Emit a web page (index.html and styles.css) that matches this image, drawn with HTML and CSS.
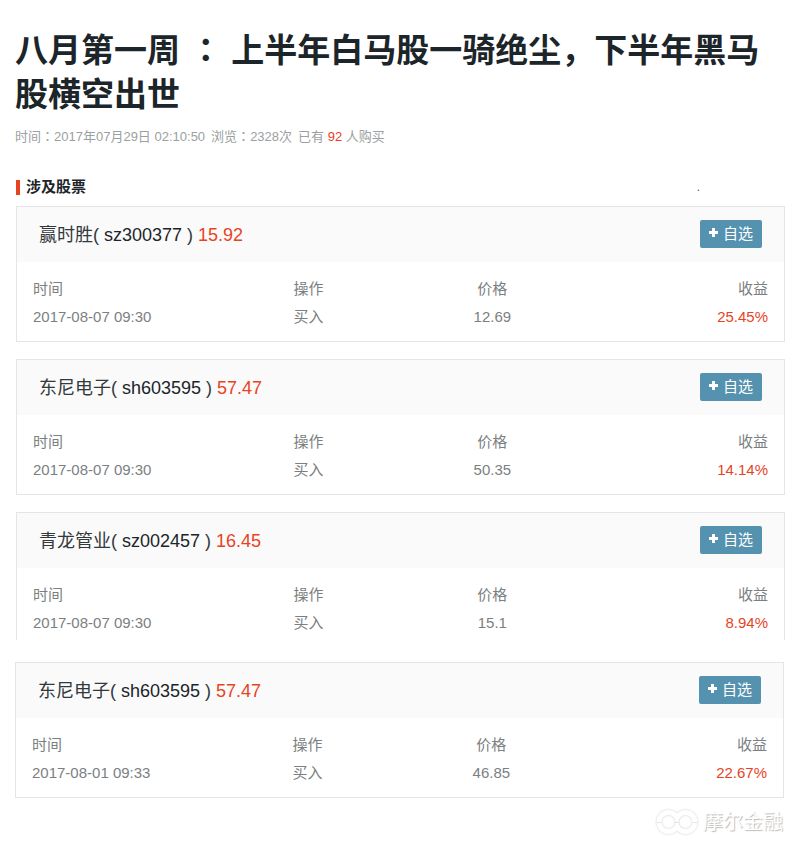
FILE: index.html
```html
<!DOCTYPE html>
<html lang="zh-CN">
<head>
    <meta charset="UTF-8">
    <meta name="viewport" content="width=device-width, initial-scale=1.0">
    <title>八月第一周</title>
    <link rel="stylesheet" href="styles.css">
</head>
<body>

    <div class="container">
        <h1 class="title">八月第一周 <span class="mark" lang="zh-TW">：</span> <span>上半年白马股一骑绝尘，下半年黑马</span><span>股横空出世</span></h1>
        <p class="meta">
            <span>时间<span class="mark" lang="zh-TW">：</span>2017年07月29日 02:10:50</span>
            <span>浏览<span class="mark" lang="zh-TW">：</span>2328次</span>
            <span>已有 <em>92</em> 人购买</span>
        </p>

        <div class="section-head">
            <h2>涉及股票</h2>
            <span class="dot">.</span>
        </div>

        <div class="stock-list">
            <section class="stock">
                <div class="stock-head">
                    <h3>赢时胜( <a href="#sz300377">sz300377</a> ) <span class="red">15.92</span></h3>
                    <button type="button" class="btn-add"><svg width="9" height="9" viewBox="0 0 9 9" aria-hidden="true"><path d="M3 0h3v3h3v3H6v3H3V6H0V3h3z"/></svg>自选</button>
                </div>
                <table>
                    <thead>
                        <tr><th>时间</th><th>操作</th><th>价格</th><th>收益</th></tr>
                    </thead>
                    <tbody>
                        <tr><td>2017-08-07 09:30</td><td>买入</td><td>12.69</td><td class="red">25.45%</td></tr>
                    </tbody>
                </table>
            </section>

            <section class="stock">
                <div class="stock-head">
                    <h3>东尼电子( <a href="#sh603595">sh603595</a> ) <span class="red">57.47</span></h3>
                    <button type="button" class="btn-add"><svg width="9" height="9" viewBox="0 0 9 9" aria-hidden="true"><path d="M3 0h3v3h3v3H6v3H3V6H0V3h3z"/></svg>自选</button>
                </div>
                <table>
                    <thead>
                        <tr><th>时间</th><th>操作</th><th>价格</th><th>收益</th></tr>
                    </thead>
                    <tbody>
                        <tr><td>2017-08-07 09:30</td><td>买入</td><td>50.35</td><td class="red">14.14%</td></tr>
                    </tbody>
                </table>
            </section>

            <section class="stock stock-open">
                <div class="stock-head">
                    <h3>青龙管业( <a href="#sz002457">sz002457</a> ) <span class="red">16.45</span></h3>
                    <button type="button" class="btn-add"><svg width="9" height="9" viewBox="0 0 9 9" aria-hidden="true"><path d="M3 0h3v3h3v3H6v3H3V6H0V3h3z"/></svg>自选</button>
                </div>
                <table>
                    <thead>
                        <tr><th>时间</th><th>操作</th><th>价格</th><th>收益</th></tr>
                    </thead>
                    <tbody>
                        <tr><td>2017-08-07 09:30</td><td>买入</td><td>15.1</td><td class="red">8.94%</td></tr>
                    </tbody>
                </table>
            </section>
        </div>

        <div class="stock-list earlier">
            <section class="stock">
                <div class="stock-head">
                    <h3>东尼电子( <a href="#sh603595">sh603595</a> ) <span class="red">57.47</span></h3>
                    <button type="button" class="btn-add"><svg width="9" height="9" viewBox="0 0 9 9" aria-hidden="true"><path d="M3 0h3v3h3v3H6v3H3V6H0V3h3z"/></svg>自选</button>
                </div>
                <table>
                    <thead>
                        <tr><th>时间</th><th>操作</th><th>价格</th><th>收益</th></tr>
                    </thead>
                    <tbody>
                        <tr><td>2017-08-01 09:33</td><td>买入</td><td>46.85</td><td class="red">22.67%</td></tr>
                    </tbody>
                </table>
            </section>
        </div>

        <footer class="brand">
            <svg width="43" height="28" viewBox="0 0 43 28" aria-hidden="true">
                <path fill="#fff" fill-rule="evenodd" d="M21 5.5A12 12 0 1 0 21 22.5A12 12 0 1 0 21 5.5ZM5.5 14A7 7 0 1 1 19.5 14A7 7 0 1 1 5.5 14ZM22.5 14A7 7 0 1 1 36.5 14A7 7 0 1 1 22.5 14Z"/>
                <path stroke="#e4e4e4" d="M1 14.5H5M19 14.5H23M37 14.5H41"/>
            </svg>
            <span>摩尔金融</span>
        </footer>
    </div>

</body>
</html>
```
FILE: styles.css
```css
*{
    box-sizing: border-box;
}

body{
    margin: 0;
    background: #fff;
    color: #7b7f82;
    font-family: "Liberation Sans", "Noto Sans CJK SC", sans-serif;
    font-size: 15px;
}

h1, h2, h3, p{
    margin: 0;
}

.container{
    padding: 29px 14px 16px;
}

.title{
    padding-left: 1px;
    color: #1c2529;
    font-size: 33px;
    line-height: 44px;
}

/* full-width colon centred in its box */
.mark{
    font-family: "Noto Sans CJK TC", sans-serif;
    line-height: 1;
}

.meta{
    display: flex;
    gap: 6px;
    margin-top: 10px;
    padding-left: 1px;
    color: #9b9fa1;
    font-size: 13px;
    line-height: 20px;
}

.meta em{
    color: #e83f1f;
    font-style: normal;
}

.section-head{
    display: flex;
    justify-content: space-between;
    align-items: center;
    margin-top: 30px;
    padding: 0 84px 0 2px;
    line-height: 20px;
}

.section-head h2{
    display: flex;
    align-items: center;
    gap: 6px;
    color: #1c2529;
    font-size: 15px;
}

.section-head h2::before{
    content: "";
    width: 4px;
    height: 15px;
    background: #e8431f;
}

.dot{
    color: #555;
    font-size: 12px;
}

.stock-list{
    display: flex;
    flex-direction: column;
    gap: 17px;
    margin: 9px -1px 0 2px;
}

.stock{
    border: 1px solid #e5e5e5;
}

.stock-open{
    border-bottom: 0;
}

.earlier{
    margin: 22px 0 0 1px;
}

.stock-head{
    display: flex;
    justify-content: space-between;
    align-items: center;
    height: 55px;
    padding: 0 22px 2px;
    background: #fafafa;
}

.stock-head h3{
    padding-bottom: 2px;
    color: #33383b;
    font-size: 18px;
    font-weight: normal;
}

.stock-head a{
    color: #1c2529;
    text-decoration: none;
}

.stock .red{
    color: #e8431f;
}

.btn-add{
    display: flex;
    align-items: center;
    justify-content: center;
    gap: 5px;
    width: 62px;
    height: 28px;
    padding: 0 0 2px;
    border: 0;
    border-radius: 2px;
    background: #5592b0;
    color: #fff;
    font-family: inherit;
    font-size: 15px;
    cursor: pointer;
}

.btn-add svg{
    fill: #fff;
}

.stock table{
    width: 100%;
    padding: 13px 16px 10px;
    border-spacing: 0;
    table-layout: fixed;
}

.stock-open table{
    padding-bottom: 3px;
}

.stock th,
.stock td{
    height: 28px;
    padding: 0;
    font-weight: normal;
    line-height: 28px;
    text-align: center;
}

.stock th:first-child,
.stock td:first-child{
    text-align: left;
}

.stock th:last-child,
.stock td:last-child{
    text-align: right;
}

.brand{
    display: flex;
    justify-content: flex-end;
    align-items: center;
    gap: 4px;
    height: 28px;
    margin-top: 10px;
    padding-right: 1px;
    color: #fff;
    font-size: 20px;
    line-height: 24px;
    text-shadow: 1px 1px 1px #bbb;
}

.brand svg{
    filter: drop-shadow(0 0 1px #ccc);
}
```
